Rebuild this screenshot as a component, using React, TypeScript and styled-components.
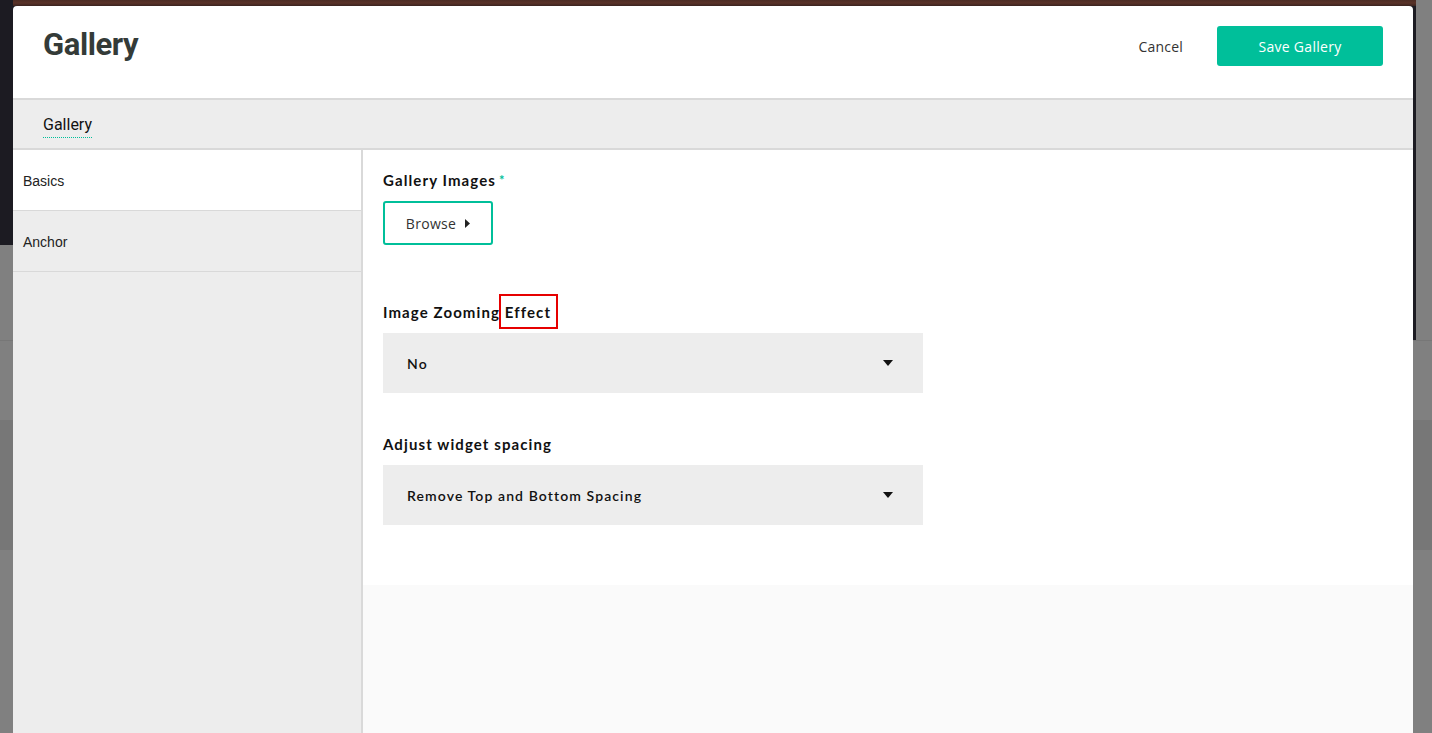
import React from "react";
import styled, { createGlobalStyle } from "styled-components";

const Global = createGlobalStyle`
  html, body { margin: 0; padding: 0; height: 100%; overflow: hidden; }
  body { background: #808080; font-family: "Open Sans", "Liberation Sans", sans-serif; }
  * { box-sizing: border-box; }
`;

const Backdrop = styled.div`
  position: fixed;
  inset: 0;
  display: flex;
  flex-direction: column;
  background: #808080;
`;

const Hero = styled.div`
  height: 341px;
  flex: none;
  display: grid;
  grid-template-columns: 13px 1fr 16px;
  border-bottom: 1px solid #777;
`;

const HeroEdge = styled.div`
  background: linear-gradient(to bottom, #1c1b22 0 245px, #808080 245px);
`;

const HeroImage = styled.div`
  background: linear-gradient(to bottom, #4b2c24 0, #5a3328 3px, #3a231f 6px, #1c1b22 6px);
`;

const Gap = styled.div<{ $h: number; $dark?: boolean }>`
  height: ${(p) => p.$h}px;
  flex: none;
  background: ${(p) => (p.$dark ? "#777777" : "#808080")};
`;

const Modal = styled.div`
  position: fixed;
  top: 6px;
  left: 13px;
  width: 1400px;
  bottom: 0;
  background: #fff;
  border-radius: 4px 4px 0 0;
  display: flex;
  flex-direction: column;
  overflow: hidden;
`;

const Header = styled.header`
  height: 94px;
  flex: none;
  display: flex;
  align-items: center;
  justify-content: space-between;
  padding: 0 30px 2px 30px;
  border-bottom: 2px solid #d9d9d9;
`;

const Title = styled.h1`
  margin: 0 0 14px 0;
  font-family: Roboto, "Liberation Sans", sans-serif;
  font-weight: 700;
  font-size: 31px;
  letter-spacing: -0.4px;
  color: #343b38;
`;

const Actions = styled.div`
  display: flex;
  align-items: center;
  gap: 34px;
  margin-bottom: 10px;
`;

const CancelButton = styled.button`
  background: none;
  border: none;
  padding: 0;
  font-family: "Open Sans", "Liberation Sans", sans-serif;
  font-size: 14px;
  color: #333;
  letter-spacing: 0.2px;
  cursor: pointer;
`;

const SaveButton = styled.button`
  width: 166px;
  height: 40px;
  border: none;
  border-radius: 3px;
  background: #00bf9a;
  color: #fff;
  font-family: "Open Sans", "Liberation Sans", sans-serif;
  font-size: 14px;
  letter-spacing: 0.3px;
  cursor: pointer;
`;

const TabBar = styled.nav`
  height: 50px;
  flex: none;
  background: #ededed;
  border-bottom: 2px solid #d9d9d9;
  display: flex;
  align-items: center;
  padding: 0 30px;
`;

const Tab = styled.span`
  font-family: Roboto, "Liberation Sans", sans-serif;
  font-size: 16px;
  color: #111;
  line-height: 20px;
  padding-bottom: 2px;
  border-bottom: 1px dotted #00bf9a;
  margin-top: 5px;
`;

const Body = styled.div`
  flex: 1;
  display: flex;
  min-height: 0;
`;

const Sidebar = styled.aside`
  width: 350px;
  flex: none;
  background: #ededed;
  border-right: 2px solid #d9d9d9;
  display: flex;
  flex-direction: column;
`;

const SideItem = styled.div<{ $active?: boolean }>`
  height: 61px;
  display: flex;
  align-items: center;
  padding: 1px 10px 0;
  border-bottom: 1px solid #d9d9d9;
  background: ${(p) => (p.$active ? "#fff" : "#ededed")};
  font-family: "Liberation Sans", Arial, sans-serif;
  font-size: 14px;
  color: #222;
`;

const Content = styled.main`
  flex: 1;
  display: flex;
  flex-direction: column;
  background: #fafafa;
`;

const Form = styled.div`
  background: #fff;
  padding: 20px 20px 60px;
  display: flex;
  flex-direction: column;
`;

const Field = styled.div<{ $space: number }>`
  display: flex;
  flex-direction: column;
  gap: 11px;
  margin-bottom: ${(p) => p.$space}px;
  &:last-child { margin-bottom: 0; }
`;

const Label = styled.label`
  font-family: Lato, "Liberation Sans", sans-serif;
  font-weight: 700;
  font-size: 15px;
  line-height: 20px;
  color: #111;
  letter-spacing: 1.1px;
`;

const Required = styled.span`
  color: #00bf9a;
  font-size: 13px;
  vertical-align: top;
  margin-left: 3px;
`;

const Highlight = styled.span`
  position: relative;
  &::after {
    content: "";
    position: absolute;
    left: -6px;
    right: -7px;
    top: -9px;
    bottom: -8px;
    border: 2px solid #e60000;
  }
`;

const BrowseButton = styled.button`
  width: 110px;
  height: 44px;
  border: 2px solid #00bf9a;
  border-radius: 3px;
  background: #fff;
  display: flex;
  align-items: center;
  justify-content: center;
  gap: 9px;
  padding: 0 0 0 0;
  font-family: "Open Sans", "Liberation Sans", sans-serif;
  font-size: 14px;
  letter-spacing: 0.3px;
  color: #333;
  cursor: pointer;
`;

const Select = styled.div`
  width: 540px;
  height: 60px;
  background: #ededed;
  display: flex;
  align-items: center;
  justify-content: space-between;
  padding: 0 30px 0 24px;
  font-family: Lato, "Liberation Sans", sans-serif;
  font-weight: 600;
  font-size: 14px;
  letter-spacing: 1.1px;
  color: #111;
`;

const Caret = ({ dir }: { dir: "right" | "down" }) =>
  dir === "right" ? (
    <svg width="5" height="9" viewBox="0 0 5 9">
      <path d="M0 0 L5 4.5 L0 9 Z" fill="#222" />
    </svg>
  ) : (
    <svg width="10" height="6" viewBox="0 0 10 6">
      <path d="M0 0 L10 0 L5 6 Z" fill="#111" />
    </svg>
  );

export default function App() {
  return (
    <>
      <Global />
      <Backdrop>
        <Hero>
          <HeroEdge />
          <HeroImage />
          <div />
        </Hero>
        <Gap $h={79} />
        <Gap $h={130} $dark />
        <Gap $h={200} />
      </Backdrop>
      <Modal>
        <Header>
          <Title>Gallery</Title>
          <Actions>
            <CancelButton>Cancel</CancelButton>
            <SaveButton>Save Gallery</SaveButton>
          </Actions>
        </Header>
        <TabBar>
          <Tab>Gallery</Tab>
        </TabBar>
        <Body>
          <Sidebar>
            <SideItem $active>Basics</SideItem>
            <SideItem>Anchor</SideItem>
          </Sidebar>
          <Content>
            <Form>
              <Field $space={57}>
                <Label>
                  Gallery Images<Required>*</Required>
                </Label>
                <div>
                  <BrowseButton>
                    Browse <Caret dir="right" />
                  </BrowseButton>
                </div>
              </Field>
              <Field $space={41}>
                <Label>
                  Image Zooming <Highlight>Effect</Highlight>
                </Label>
                <Select>
                  <span>No</span>
                  <Caret dir="down" />
                </Select>
              </Field>
              <Field $space={0}>
                <Label>Adjust widget spacing</Label>
                <Select>
                  <span>Remove Top and Bottom Spacing</span>
                  <Caret dir="down" />
                </Select>
              </Field>
            </Form>
          </Content>
        </Body>
      </Modal>
    </>
  );
}
